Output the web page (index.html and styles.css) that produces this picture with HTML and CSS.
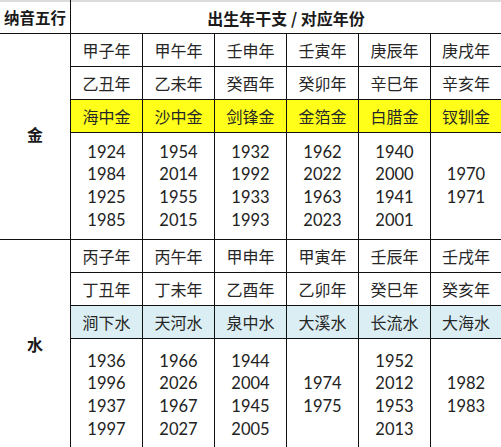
FILE: index.html
```html
<!DOCTYPE html>
<html lang="zh">
<head>
<meta charset="utf-8">
<title>纳音五行</title>
<link rel="stylesheet" href="styles.css">
</head>
<body>
<div class="table">
  <div class="cell head first">纳音五行</div>
  <div class="cell head wide">出生年干支 / 对应年份</div>

  <div class="cell label g1">金</div>
  <div class="cell">甲子年</div><div class="cell">甲午年</div><div class="cell">壬申年</div><div class="cell">壬寅年</div><div class="cell">庚辰年</div><div class="cell">庚戌年</div>
  <div class="cell">乙丑年</div><div class="cell">乙未年</div><div class="cell">癸酉年</div><div class="cell">癸卯年</div><div class="cell">辛巳年</div><div class="cell">辛亥年</div>
  <div class="cell gold">海中金</div><div class="cell gold">沙中金</div><div class="cell gold">剑锋金</div><div class="cell gold">金箔金</div><div class="cell gold">白腊金</div><div class="cell gold">钗钏金</div>
  <div class="cell years"><span>1924</span><span>1984</span><span>1925</span><span>1985</span></div>
  <div class="cell years"><span>1954</span><span>2014</span><span>1955</span><span>2015</span></div>
  <div class="cell years"><span>1932</span><span>1992</span><span>1933</span><span>1993</span></div>
  <div class="cell years"><span>1962</span><span>2022</span><span>1963</span><span>2023</span></div>
  <div class="cell years"><span>1940</span><span>2000</span><span>1941</span><span>2001</span></div>
  <div class="cell years"><span>1970</span><span>1971</span></div>

  <div class="cell label g2">水</div>
  <div class="cell">丙子年</div><div class="cell">丙午年</div><div class="cell">甲申年</div><div class="cell">甲寅年</div><div class="cell">壬辰年</div><div class="cell">壬戌年</div>
  <div class="cell">丁丑年</div><div class="cell">丁未年</div><div class="cell">乙酉年</div><div class="cell">乙卯年</div><div class="cell">癸巳年</div><div class="cell">癸亥年</div>
  <div class="cell water">涧下水</div><div class="cell water">天河水</div><div class="cell water">泉中水</div><div class="cell water">大溪水</div><div class="cell water">长流水</div><div class="cell water">大海水</div>
  <div class="cell years low"><span>1936</span><span>1996</span><span>1937</span><span>1997</span></div>
  <div class="cell years low"><span>1966</span><span>2026</span><span>1967</span><span>2027</span></div>
  <div class="cell years low"><span>1944</span><span>2004</span><span>1945</span><span>2005</span></div>
  <div class="cell years low"><span>1974</span><span>1975</span></div>
  <div class="cell years low"><span>1952</span><span>2012</span><span>1953</span><span>2013</span></div>
  <div class="cell years low"><span>1982</span><span>1983</span></div>
</div>
</body>
</html>
```
FILE: styles.css
```css
html, body {
  margin: 0;
  padding: 0;
  background: #ffffff;
}

.table {
  width: 501px;
  display: grid;
  grid-template-columns: 70px repeat(5, 71px) 70px;
  grid-template-rows: 33px 32px 32px 32px 106px 32px 32px 32px 108px;
  gap: 1px;
  background: #111111;
  font-family: "Noto Sans CJK SC", "Noto Sans", sans-serif;
  font-size: 16px;
  color: #262626;
}

.cell {
  background: #ffffff;
  display: flex;
  align-items: center;
  justify-content: center;
  white-space: nowrap;
  line-height: 1;
}

.head {
  border-top: 2px solid #dcdcdc;
  box-sizing: border-box;
  font-weight: bold;
  color: #1a1a1a;
}

.head.first {
  font-size: 15.5px;
}

.head.wide {
  grid-column: span 6;
}

.label {
  grid-row: span 4;
  font-weight: bold;
  color: #1a1a1a;
  box-sizing: border-box;
}

.label.g1 {
  padding-bottom: 5px;
}

.gold {
  background: #ffff1a;
}

.water {
  background: #dbeef3;
}

.years {
  flex-direction: column;
  font-family: Lato, "Open Sans", sans-serif;
  font-size: 16.5px;
  line-height: 22.7px;
  color: #222222;
}

.years.low {
  padding-top: 4px;
  box-sizing: border-box;
}
```
